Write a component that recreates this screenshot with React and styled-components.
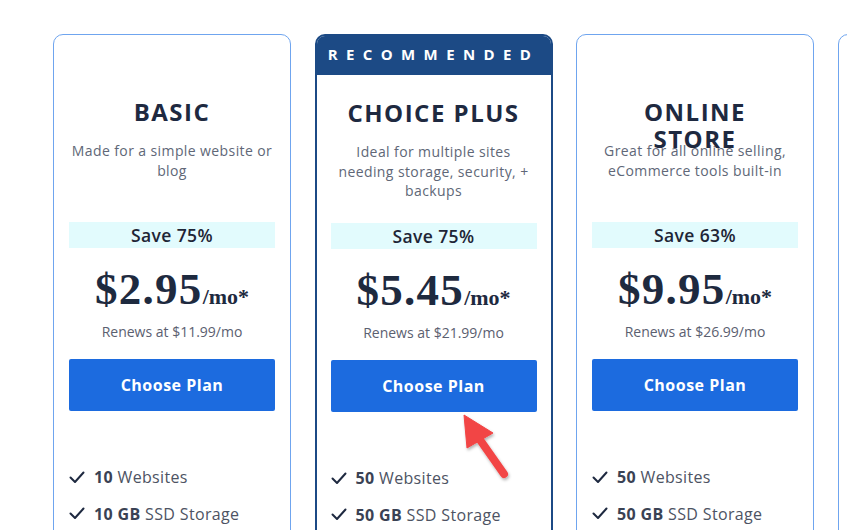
import React from 'react';
import styled, { createGlobalStyle } from 'styled-components';

const GlobalStyle = createGlobalStyle`
  html, body {
    margin: 0;
    padding: 0;
    background: #ffffff;
    overflow: hidden;
  }
  body {
    font-family: "Open Sans", "Noto Sans", sans-serif;
    color: #1e2a40;
  }
`;

const Page = styled.div`
  position: relative;
  width: 847px;
  height: 530px;
  overflow: hidden;
`;

const Row = styled.div`
  display: flex;
  gap: 23.5px;
  padding: 34px 0 0 53px;
  align-items: flex-start;
`;

const Card = styled.div`
  flex: 0 0 238px;
  box-sizing: border-box;
  min-height: 620px;
  display: flex;
  flex-direction: column;
  border: ${({ $featured }) => ($featured ? '2px solid #1c4a85' : '1px solid #6fa5ef')};
  border-radius: 10px;
  padding: ${({ $featured }) => ($featured ? '0 14px' : '41px 15px 0')};
  overflow: hidden;
`;

const Ribbon = styled.div`
  height: 39px;
  margin: 0 -14px 2px;
  padding-bottom: 3px;
  box-sizing: border-box;
  background: #1c4a85;
  color: #ffffff;
  display: flex;
  align-items: center;
  justify-content: center;
  font-weight: 700;
  font-size: 15px;
  letter-spacing: 8.4px;
`;

const Title = styled.h2`
  margin: 22px auto 16px;
  max-width: 180px;
  height: 27px;
  line-height: 27px;
  font-size: 24px;
  font-weight: 700;
  letter-spacing: 1.5px;
  text-align: center;
  color: #1e2940;
  position: relative;
  z-index: 1;
`;

const Desc = styled.p`
  margin: 0 0 21px;
  height: 60px;
  font-size: 14px;
  line-height: 19.5px;
  letter-spacing: 0.4px;
  text-align: center;
  color: #606777;
`;

const Save = styled.div`
  height: 26px;
  line-height: 26px;
  background: #e2fbfd;
  text-align: center;
  font-size: 17.5px;
  font-weight: 600;
  letter-spacing: 0.4px;
  color: #1e2536;
`;

const Price = styled.div`
  margin-top: 16px;
  height: 50px;
  display: flex;
  justify-content: center;
  align-items: baseline;
  font-family: "Liberation Serif", "Times New Roman", serif;
  font-weight: 700;
  color: #1e2a3f;
`;

const Amount = styled.span`
  font-size: 45px;
  line-height: 50px;
  letter-spacing: 1.3px;
`;

const Unit = styled.span`
  font-size: 22px;
`;

const Renews = styled.div`
  margin-top: 8px;
  line-height: 20px;
  font-size: 14px;
  text-align: center;
  color: #5b6070;
`;

const ChooseButton = styled.button`
  margin-top: 17px;
  height: 52px;
  border: none;
  border-radius: 2px;
  background: #1c6bdf;
  color: #ffffff;
  font-family: "Open Sans", "Noto Sans", sans-serif;
  font-size: 16px;
  font-weight: 700;
  letter-spacing: 0.5px;
  cursor: pointer;
`;

const Features = styled.ul`
  list-style: none;
  margin: 54px 0 0;
  padding: 0;
  display: flex;
  flex-direction: column;
  gap: 12.5px;
`;

const Feature = styled.li`
  display: flex;
  align-items: center;
  gap: 9px;
  height: 24px;
  font-size: 16px;
  letter-spacing: 0.35px;
  color: #4d5363;

  b {
    font-weight: 700;
    color: #3a4254;
  }
`;

const Check = styled.svg`
  width: 16px;
  height: 13px;
  flex: 0 0 16px;
`;

const Arrow = styled.svg`
  position: absolute;
  left: 455px;
  top: 408px;
  width: 60px;
  height: 76px;
  overflow: visible;
`;

const plans = [
  {
    name: 'BASIC',
    desc: 'Made for a simple website or blog',
    save: 'Save 75%',
    price: '$2.95',
    renews: 'Renews at $11.99/mo',
    features: [['10', 'Websites'], ['10 GB', 'SSD Storage']],
  },
  {
    name: 'CHOICE PLUS',
    featured: true,
    desc: 'Ideal for multiple sites needing storage, security, + backups',
    save: 'Save 75%',
    price: '$5.45',
    renews: 'Renews at $21.99/mo',
    features: [['50', 'Websites'], ['50 GB', 'SSD Storage']],
  },
  {
    name: 'ONLINE STORE',
    desc: 'Great for all online selling, eCommerce tools built-in',
    save: 'Save 63%',
    price: '$9.95',
    renews: 'Renews at $26.99/mo',
    features: [['50', 'Websites'], ['50 GB', 'SSD Storage']],
  },
  {
    name: 'PRO',
    desc: 'Additional resources for complex sites',
    save: 'Save 49%',
    price: '$13.95',
    renews: 'Renews at $28.99/mo',
    features: [['100', 'Websites'], ['100 GB', 'SSD Storage']],
  },
];

const CheckIcon = () => (
  <Check viewBox="0 0 16 13">
    <polyline points="1.5,6.5 6,11 14.5,1.5" fill="none" stroke="#1e2940" strokeWidth="2" strokeLinecap="round" strokeLinejoin="round" />
  </Check>
);

const PlanCard = ({ plan }) => (
  <Card $featured={plan.featured}>
    {plan.featured && <Ribbon>RECOMMENDED</Ribbon>}
    <Title>{plan.name}</Title>
    <Desc>{plan.desc}</Desc>
    <Save>{plan.save}</Save>
    <Price>
      <Amount>{plan.price}</Amount>
      <Unit>/mo*</Unit>
    </Price>
    <Renews>{plan.renews}</Renews>
    <ChooseButton>Choose Plan</ChooseButton>
    <Features>
      {plan.features.map(([bold, rest]) => (
        <Feature key={rest}>
          <CheckIcon />
          <span><b>{bold}</b> {rest}</span>
        </Feature>
      ))}
    </Features>
  </Card>
);

export default function App() {
  return (
    <Page>
      <GlobalStyle />
      <Row>
        {plans.map((p) => (
          <PlanCard key={p.name} plan={p} />
        ))}
      </Row>
      <Arrow viewBox="455 408 60 76">
        <defs>
          <filter id="arrowShadow" x="-30%" y="-30%" width="160%" height="160%">
            <feDropShadow dx="1" dy="2" stdDeviation="1.5" floodColor="#000" floodOpacity="0.3" />
          </filter>
        </defs>
        <g filter="url(#arrowShadow)" fill="#f24545" stroke="#f24545">
          <line x1="478" y1="437" x2="504" y2="474" strokeWidth="8" strokeLinecap="round" />
          <polygon points="464,415 493,433 467,448" strokeWidth="1" strokeLinejoin="round" />
        </g>
      </Arrow>
    </Page>
  );
}
